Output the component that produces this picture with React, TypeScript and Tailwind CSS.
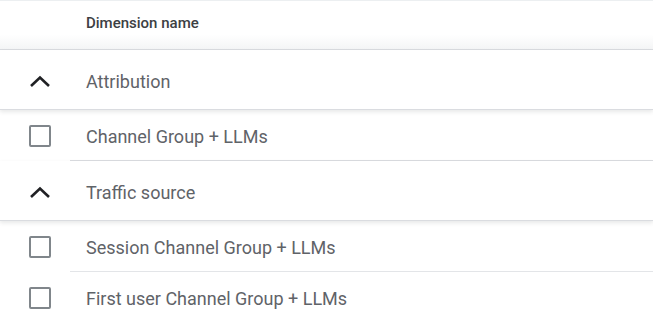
import React from 'react';

type Row =
  | { kind: 'group'; label: string }
  | { kind: 'item'; label: string; last?: boolean };

const rows: Row[] = [
  { kind: 'group', label: 'Attribution' },
  { kind: 'item', label: 'Channel Group + LLMs', last: true },
  { kind: 'group', label: 'Traffic source' },
  { kind: 'item', label: 'Session Channel Group + LLMs' },
  { kind: 'item', label: 'First user Channel Group + LLMs' },
];

const ChevronUp = () => (
  <svg width="22" height="14" viewBox="0 0 22 14" className="block">
    <path d="M2 12 L11 3.5 L20 12" fill="none" stroke="#202124" strokeWidth="2.6" />
  </svg>
);

const Checkbox = () => (
  <div className="w-[22px] h-[22px] border-2 border-[#80868b] rounded-[2px] bg-white" />
);

export default function App() {
  return (
    <div className="w-[653px] h-[319px] overflow-hidden bg-white font-['Roboto',sans-serif]">
      {/* header */}
      <div className="h-[50px] flex items-center border-t border-[#eceff1] border-b border-b-[#dadce0] bg-gradient-to-b from-white from-70% to-[#f4f5f6]">
        <div className="w-[86px]" />
        <span className="text-[15px] font-medium text-[#3c4043] leading-none -mt-[4px]">Dimension name</span>
      </div>

      {rows.map((row, i) =>
        row.kind === 'group' ? (
          <div
            key={i}
            className="relative z-10 h-[60px] flex items-center bg-white border-b border-[#dadce0] shadow-[0_2px_4px_rgba(60,64,67,0.12)]"
          >
            <div className="w-[80px] flex justify-center pr-[1px] mt-[3px]">
              <ChevronUp />
            </div>
            <span className="ml-[6px] text-[18px] text-[#5f6368] mt-[3px]">{row.label}</span>
          </div>
        ) : (
          <div key={i} className="h-[51px] flex items-stretch bg-white">
            <div className="w-[70px] flex items-center justify-center pl-[9px]">
              <Checkbox />
            </div>
            <div
              className={`flex-1 flex items-center pl-[16px] border-b ${row.last ? 'border-[#dadce0]' : 'border-[#e3e5e8]'}`}
            >
              <span className="text-[18px] text-[#5f6368] mt-[2px]">{row.label}</span>
            </div>
          </div>
        )
      )}
    </div>
  );
}
